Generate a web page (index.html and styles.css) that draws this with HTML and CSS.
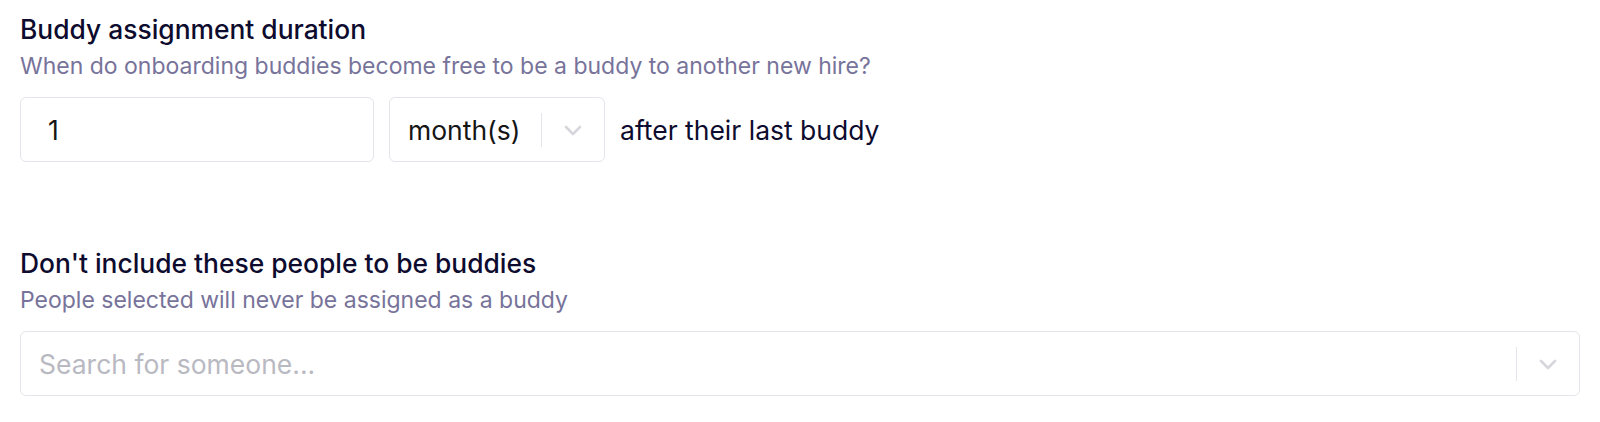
FILE: index.html
```html
<!DOCTYPE html>
<html lang="en">
<head>
  <meta charset="UTF-8" />
  <title>Buddy settings</title>
  <link rel="stylesheet" href="styles.css">
</head>
<body>

<section class="setting">
  <h3 class="setting-title">Buddy assignment duration</h3>
  <p class="setting-desc">When do onboarding buddies become free to be a buddy to another new hire?</p>
  <div class="duration-row">
    <input class="text-input" type="text" value="1" />
    <div class="select select-unit">
      <span class="select-value">month(s)</span>
      <span class="select-sep"></span>
      <svg class="chevron" width="20" height="20" viewBox="0 0 20 20"><path d="M3 7l7 7 7-7" fill="none" stroke="currentColor" stroke-width="2.6" stroke-linecap="round" stroke-linejoin="round"/></svg>
    </div>
    <span class="duration-suffix">after their last buddy</span>
  </div>
</section>

<section class="setting setting-exclude">
  <h3 class="setting-title">Don't include these people to be buddies</h3>
  <p class="setting-desc">People selected will never be assigned as a buddy</p>
  <div class="select select-search">
    <span class="select-placeholder">Search for someone...</span>
    <span class="select-sep"></span>
    <svg class="chevron" width="20" height="20" viewBox="0 0 20 20"><path d="M3 7l7 7 7-7" fill="none" stroke="currentColor" stroke-width="2.6" stroke-linecap="round" stroke-linejoin="round"/></svg>
  </div>
</section>

</body>
</html>
```

FILE: styles.css
```css
body {
  font-family: Inter, 'Noto Sans', sans-serif;
  background: #ffffff;
  margin: 0;
  padding: 13px 20px 0;
  color: #0d0b2e;
}
.setting-title {
  font-size: 26.4px;
  font-weight: 500;
  line-height: 32px;
  margin: 0;
  color: #0d0b2e;
}
.setting-desc {
  font-size: 23px;
  line-height: 30px;
  margin: 6px 0 0;
  color: #77739a;
}
.duration-row {
  display: flex;
  align-items: center;
  gap: 15px;
  margin-top: 16px;
}
.text-input {
  box-sizing: border-box;
  width: 354px;
  height: 65px;
  padding: 0 27px;
  border: 1px solid #e4e4ea;
  border-radius: 6px;
  font-family: inherit;
  font-size: 26.5px;
  color: #151515;
  outline: none;
}
.select {
  box-sizing: border-box;
  display: flex;
  align-items: center;
  height: 65px;
  border: 1px solid #e4e4ea;
  border-radius: 6px;
  background: #fff;
  font-size: 26.5px;
}
.select-unit {
  width: 216px;
  padding: 0 21px 0 18px;
}
.select-value {
  flex: 1;
  color: #151515;
}
.select-sep {
  width: 1px;
  height: 34px;
  background: #e4e4ea;
  margin-right: 21px;
}
.chevron {
  display: block;
  color: #d6d6dc;
}
.duration-suffix {
  font-size: 26.5px;
  color: #0d0b2e;
}
.setting-exclude {
  margin-top: 85px;
}
.select-search {
  margin-top: 16px;
  padding: 0 21px 0 18px;
}
.select-placeholder {
  flex: 1;
  color: #b9b9c2;
}
```
